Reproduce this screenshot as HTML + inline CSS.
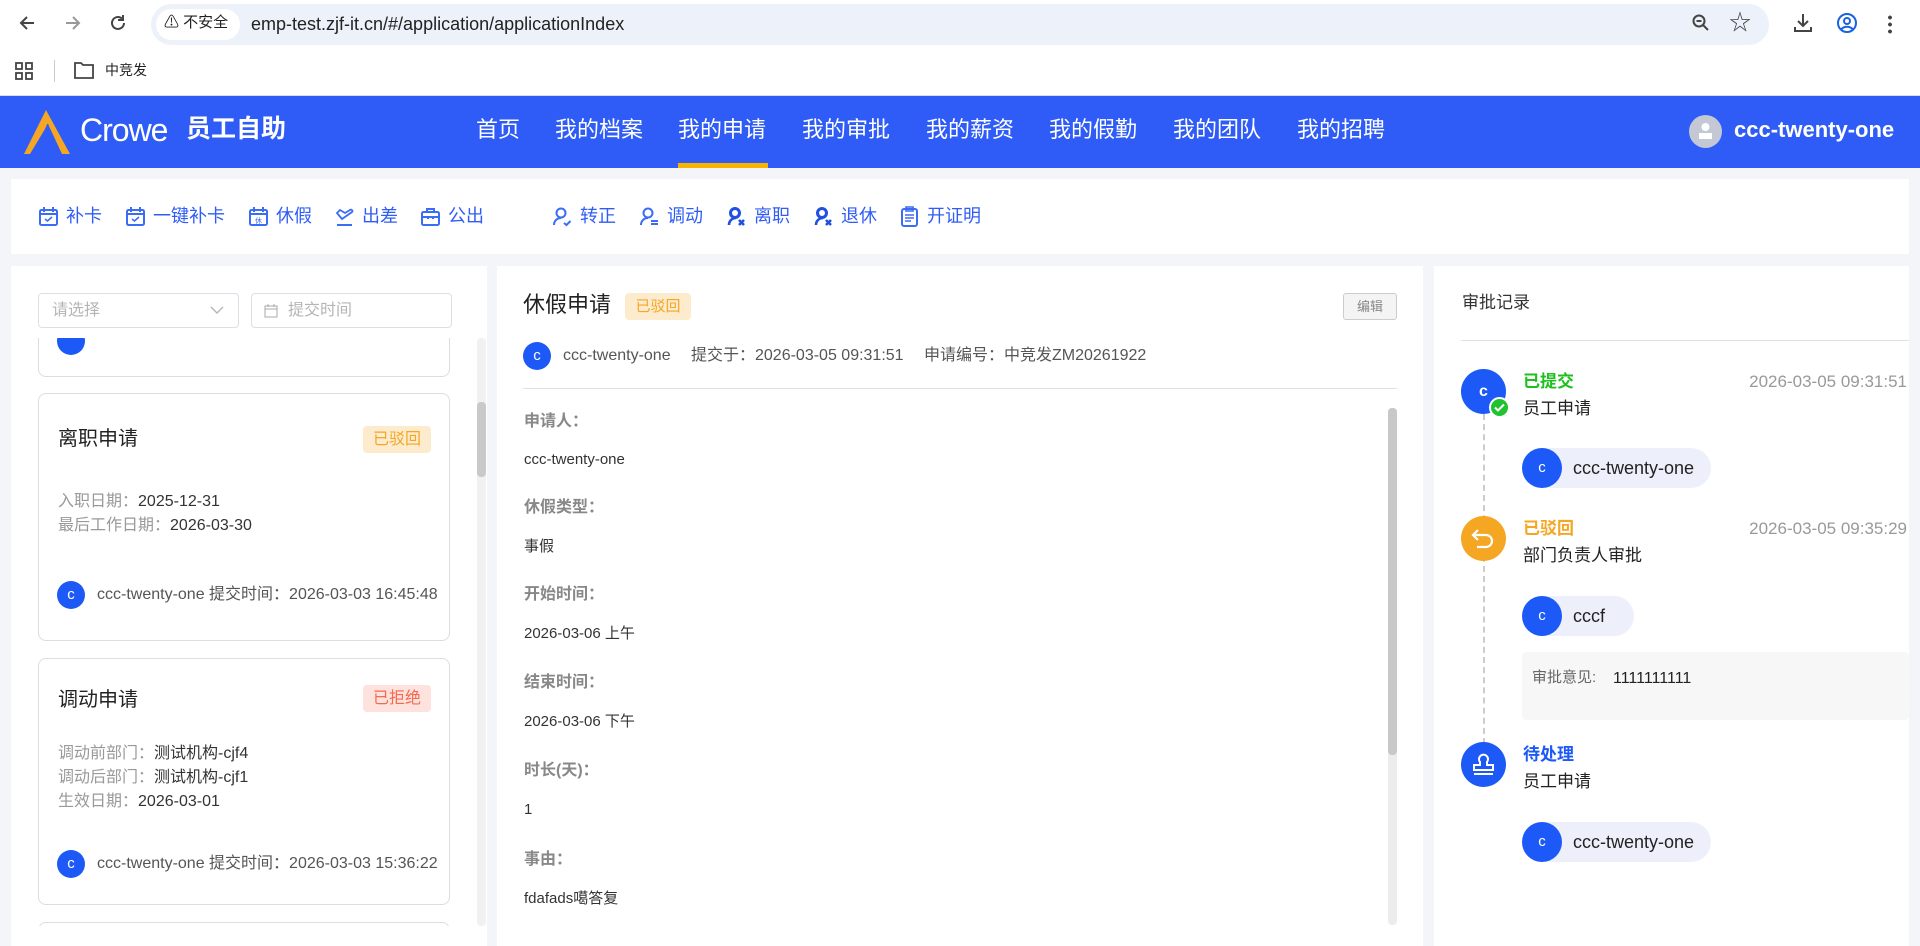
<!DOCTYPE html>
<html><head><meta charset="utf-8"><style>
*{margin:0;padding:0;box-sizing:border-box}
html,body{width:1920px;height:946px;overflow:hidden}
body{background:#f4f5f9;font-family:"Liberation Sans","Noto Sans CJK SC",sans-serif;position:relative;color:#333}
.a{position:absolute;white-space:nowrap;line-height:1.25}
.nav{position:absolute;top:115px;font-size:22px;color:#fff;line-height:30px}
.tb{position:absolute;top:204px;font-size:18px;color:#2f5cf6;line-height:24px}
.tb svg{position:absolute;left:-28px;top:2px}
.card{position:absolute;left:38px;width:412px;border:1px solid #ddd;border-radius:8px;background:#fff}
.badge{position:absolute;border-radius:4px;font-size:16px;text-align:center;line-height:27px}
.av{position:absolute;border-radius:50%;background:#1c59f7;color:#fff;text-align:center;font-size:15px}
.lab{color:#999}
.fl{position:absolute;left:524px;font-size:16px;font-weight:bold;color:#888;line-height:20px}
.fv{position:absolute;left:524px;font-size:15px;color:#333;line-height:19px}
.pill{position:absolute;left:1522px;height:40px;border-radius:20px;background:#edf0fb;font-size:18px;color:#222;line-height:40px;padding-left:51px}
.pill i{position:absolute;left:0;top:0;width:40px;height:40px;border-radius:50%;background:#1c59f7;color:#fff;font-style:normal;font-size:15px;text-align:center;line-height:40px}
</style></head><body>
<div class="a" style="left:0;top:0;width:1920px;height:95px;background:#fff"></div>
<div class="a" style="left:0;top:95px;width:1920px;height:1px;background:#dcdcdc"></div>
<svg class="a" style="left:17px;top:13px" width="20" height="20" viewBox="0 0 20 20"><path d="M17 10H4M10 4L4 10l6 6" stroke="#444" stroke-width="2" fill="none"/></svg>
<svg class="a" style="left:63px;top:13px" width="20" height="20" viewBox="0 0 20 20"><path d="M3 10h13M10 4l6 6-6 6" stroke="#999" stroke-width="2" fill="none"/></svg>
<svg class="a" style="left:108px;top:13px" width="20" height="20" viewBox="0 0 20 20"><path d="M16 10a6 6 0 1 1-2-4.5" stroke="#444" stroke-width="2" fill="none"/><path d="M15 2v5h-5" stroke="#444" stroke-width="2" fill="none"/></svg>
<div class="a" style="left:151px;top:4px;width:1618px;height:41px;border-radius:21px;background:#edf1f9"></div>
<div class="a" style="left:156px;top:9px;width:84px;height:31px;border-radius:16px;background:#fff"></div>
<div class="a" style="left:164px;top:14px;font-size:15px;color:#222">⚠ 不安全</div>
<div class="a" style="left:251px;top:13px;font-size:18px;color:#222">emp-test.zjf-it.cn/#/application/applicationIndex</div>
<svg class="a" style="left:1691px;top:13px" width="20" height="20" viewBox="0 0 20 20"><circle cx="8" cy="8" r="5.5" stroke="#444" stroke-width="2" fill="none"/><path d="M12 12l5 5M5.5 8h5" stroke="#444" stroke-width="2"/></svg>
<div class="a" style="left:1729px;top:9px;font-size:22px;color:#444">☆</div>
<svg class="a" style="left:1792px;top:12px" width="22" height="22" viewBox="0 0 22 22"><path d="M11 2v12M6 9l5 5 5-5M3 15v4h16v-4" stroke="#444" stroke-width="2" fill="none"/></svg>
<svg class="a" style="left:1836px;top:12px" width="22" height="22" viewBox="0 0 22 22"><circle cx="11" cy="11" r="9" stroke="#1a63e0" stroke-width="2" fill="none"/><circle cx="11" cy="9" r="3" stroke="#1a63e0" stroke-width="2" fill="none"/><path d="M5.5 17c3-3 8-3 11 0" stroke="#1a63e0" stroke-width="2" fill="none"/></svg>
<div class="a" style="left:1888px;top:14px;width:4px;height:20px;background:radial-gradient(circle,#444 1.8px,transparent 2px) 0 0/4px 7px"></div>
<svg class="a" style="left:15px;top:62px" width="18" height="18" viewBox="0 0 18 18"><g stroke="#444" stroke-width="1.8" fill="none"><rect x="1" y="1" width="6" height="6"/><rect x="11" y="1" width="6" height="6"/><rect x="1" y="11" width="6" height="6"/><rect x="11" y="11" width="6" height="6"/></g></svg>
<div class="a" style="left:54px;top:60px;width:1px;height:22px;background:#ccc"></div>
<svg class="a" style="left:74px;top:61px" width="20" height="18" viewBox="0 0 20 18"><path d="M1 2h6l2 2h10v13H1z" stroke="#444" stroke-width="1.8" fill="none"/></svg>
<div class="a" style="left:105px;top:62px;font-size:14px;color:#222">中竞发</div>
<div class="a" style="left:0;top:96px;width:1920px;height:72px;background:#2f5cf6"></div>
<svg class="a" style="left:22px;top:108px" width="50" height="48" viewBox="0 0 50 48"><path d="M24 2L48 46 40 46 26 16 8 46 2 46z" fill="#f5a623"/><path d="M26 16L14 44M28 22L20 44M30 28L26 44" stroke="#2f5cf6" stroke-width="1.5"/></svg>
<div class="a" style="left:80px;top:110px;font-size:32px;color:#fff;letter-spacing:-1px">Crowe</div>
<div class="a" style="left:186px;top:114px;font-size:25px;color:#fff;font-weight:bold">员工自助</div>
<div class="nav" style="left:476px">首页</div>
<div class="nav" style="left:555px">我的档案</div>
<div class="nav" style="left:678px">我的申请</div>
<div class="nav" style="left:802px">我的审批</div>
<div class="nav" style="left:926px">我的薪资</div>
<div class="nav" style="left:1049px">我的假勤</div>
<div class="nav" style="left:1173px">我的团队</div>
<div class="nav" style="left:1297px">我的招聘</div>
<div class="a" style="left:678px;top:163px;width:90px;height:5px;background:#f7b500"></div>
<div class="a" style="left:1689px;top:115px;width:33px;height:33px;border-radius:50%;background:#c4c8d4"></div>
<svg class="a" style="left:1697px;top:121px" width="17" height="20" viewBox="0 0 17 20"><circle cx="8.5" cy="6" r="4" fill="#fff"/><rect x="2" y="12" width="13" height="6" fill="#fff"/></svg>
<div class="a" style="left:1734px;top:116px;font-size:22px;font-weight:bold;color:#fff">ccc-twenty-one</div>
<div class="a" style="left:11px;top:179px;width:1898px;height:75px;background:#fff"></div>
<svg width="0" height="0" style="position:absolute"><defs>
<g id="cal"><rect x="2" y="4" width="17" height="15" rx="1.5" stroke="#3b6cf5" stroke-width="2" fill="none"/><path d="M2 8h17M6 1v5M15 1v5" stroke="#3b6cf5" stroke-width="2"/></g>
</defs></svg>
<div class="tb" style="left:66px"><svg width="21" height="21" viewBox="0 0 21 21"><use href="#cal"/><path d="M7 13l2.5 2 4.5-4" stroke="#3b6cf5" stroke-width="1.6" fill="none"/></svg>补卡</div>
<div class="tb" style="left:153px"><svg width="21" height="21" viewBox="0 0 21 21"><use href="#cal"/><path d="M7 13l2.5 2 4.5-4" stroke="#3b6cf5" stroke-width="1.6" fill="none"/></svg>一键补卡</div>
<div class="tb" style="left:276px"><svg width="21" height="21" viewBox="0 0 21 21"><use href="#cal"/><text x="10.5" y="17" font-size="7" text-anchor="middle" fill="#3b6cf5" font-family="Noto Sans CJK SC">休</text></svg>休假</div>
<div class="tb" style="left:362px"><svg width="21" height="21" viewBox="0 0 21 21"><path d="M3 7l5 6 10-7c1-1 0-3-2-2l-5 3-5-3z" stroke="#3b6cf5" stroke-width="1.8" fill="none"/><path d="M3 19h15" stroke="#3b6cf5" stroke-width="2"/></svg>出差</div>
<div class="tb" style="left:448px"><svg width="21" height="21" viewBox="0 0 21 21"><rect x="2" y="6" width="17" height="13" rx="1.5" stroke="#3b6cf5" stroke-width="2" fill="none"/><path d="M7 6V3h7v3M2 11h17M8 10v3M13 10v3" stroke="#3b6cf5" stroke-width="2" fill="none"/></svg>公出</div>
<div class="tb" style="left:580px"><svg width="21" height="21" viewBox="0 0 21 21"><circle cx="9" cy="7" r="4.5" stroke="#3b6cf5" stroke-width="2" fill="none"/><path d="M2 19c0-4 3-7 7-7M12 17l2.5 2 4-4" stroke="#3b6cf5" stroke-width="2" fill="none"/></svg>转正</div>
<div class="tb" style="left:667px"><svg width="21" height="21" viewBox="0 0 21 21"><circle cx="9" cy="7" r="4.5" stroke="#3b6cf5" stroke-width="2" fill="none"/><path d="M2 19c0-4 3-7 7-7M12 15h7M12 18h7" stroke="#3b6cf5" stroke-width="2" fill="none"/></svg>调动</div>
<div class="tb" style="left:754px"><svg width="21" height="21" viewBox="0 0 21 21"><circle cx="9" cy="7" r="4.5" stroke="#2050e0" stroke-width="3" fill="none"/><path d="M3 19c0-4 3-7 7-7M13 14l5 5M18 14l-5 5" stroke="#2050e0" stroke-width="2.6" fill="none"/></svg>离职</div>
<div class="tb" style="left:841px"><svg width="21" height="21" viewBox="0 0 21 21"><circle cx="9" cy="7" r="4.5" stroke="#2050e0" stroke-width="3" fill="none"/><path d="M3 19c0-4 3-7 7-7M13 14l5 5M18 14l-5 5" stroke="#2050e0" stroke-width="2.6" fill="none"/></svg>退休</div>
<div class="tb" style="left:927px"><svg width="21" height="21" viewBox="0 0 21 21"><rect x="3" y="3" width="15" height="17" rx="2" stroke="#3b6cf5" stroke-width="2" fill="none"/><path d="M7 1h7v4H7zM6 9h9M6 12h9M6 15h6" stroke="#3b6cf5" stroke-width="1.6" fill="none"/></svg>开证明</div>
<div class="a" style="left:11px;top:266px;width:476px;height:680px;background:#fff"></div>
<div class="a" style="left:38px;top:293px;width:201px;height:35px;border:1px solid #dcdfe6;border-radius:4px"></div>
<div class="a" style="left:52px;top:301px;font-size:16px;color:#b5b5b5">请选择</div>
<svg class="a" style="left:210px;top:305px" width="14" height="10" viewBox="0 0 14 10"><path d="M1 2l6 6 6-6" stroke="#b5b5b5" stroke-width="1.4" fill="none"/></svg>
<div class="a" style="left:251px;top:293px;width:201px;height:35px;border:1px solid #dcdfe6;border-radius:4px"></div>
<svg class="a" style="left:264px;top:304px" width="14" height="14" viewBox="0 0 14 14"><rect x="1" y="2" width="12" height="11" stroke="#aaa" fill="none"/><path d="M1 5h12M4 0v3M10 0v3" stroke="#aaa"/></svg>
<div class="a" style="left:288px;top:301px;font-size:16px;color:#b5b5b5">提交时间</div>
<div class="a" style="left:11px;top:338px;width:466px;height:588px;overflow:hidden">
 <div class="card" style="left:27px;top:-60px;height:99px"><div class="av" style="left:18px;top:48px;width:28px;height:28px"></div></div>
 <div class="card" style="left:27px;top:55px;height:248px">
  <div class="a" style="left:19px;top:33px;font-size:20px;color:#222">离职申请</div>
  <div class="badge" style="left:324px;top:32px;width:68px;background:#fdebcd;color:#f5a623">已驳回</div>
  <div class="a" style="left:19px;top:98px;font-size:16px"><span class="lab">入职日期：</span>2025-12-31</div>
  <div class="a" style="left:19px;top:122px;font-size:16px"><span class="lab">最后工作日期：</span>2026-03-30</div>
  <div class="av" style="left:18px;top:187px;width:28px;height:28px;line-height:28px">c</div>
  <div class="a" style="left:58px;top:191px;font-size:16px;color:#555">ccc-twenty-one 提交时间：2026-03-03 16:45:48</div>
 </div>
 <div class="card" style="left:27px;top:320px;height:247px">
  <div class="a" style="left:19px;top:29px;font-size:20px;color:#222">调动申请</div>
  <div class="badge" style="left:324px;top:26px;width:68px;background:#fde2dd;color:#f5694e">已拒绝</div>
  <div class="a" style="left:19px;top:85px;font-size:16px"><span class="lab">调动前部门：</span>测试机构-cjf4</div>
  <div class="a" style="left:19px;top:109px;font-size:16px"><span class="lab">调动后部门：</span>测试机构-cjf1</div>
  <div class="a" style="left:19px;top:133px;font-size:16px"><span class="lab">生效日期：</span>2026-03-01</div>
  <div class="av" style="left:18px;top:191px;width:28px;height:28px;line-height:28px">c</div>
  <div class="a" style="left:58px;top:195px;font-size:16px;color:#555">ccc-twenty-one 提交时间：2026-03-03 15:36:22</div>
 </div>
 <div class="card" style="left:27px;top:584px;height:100px"></div>
</div>
<div class="a" style="left:477px;top:338px;width:9px;height:588px;background:#f1f1f1;border-radius:4px"></div>
<div class="a" style="left:477px;top:402px;width:9px;height:75px;background:#c9c9c9;border-radius:4px"></div>
<div class="a" style="left:497px;top:266px;width:926px;height:680px;background:#fff"></div>
<div class="a" style="left:523px;top:291px;font-size:22px;color:#222">休假申请</div>
<div class="badge" style="left:625px;top:293px;width:66px;background:#fdebcd;color:#f5a623;font-size:15px">已驳回</div>
<div class="a" style="left:1343px;top:293px;width:54px;height:27px;border:1px solid #ccc;border-radius:3px;background:#f4f4f4;color:#888;font-size:13px;text-align:center;line-height:25px">编辑</div>
<div class="av" style="left:523px;top:342px;width:28px;height:28px;line-height:28px">c</div>
<div class="a" style="left:563px;top:346px;font-size:16px;color:#555">ccc-twenty-one</div>
<div class="a" style="left:691px;top:346px;font-size:16px;color:#555">提交于：2026-03-05 09:31:51</div>
<div class="a" style="left:924px;top:346px;font-size:16px;color:#555">申请编号：中竞发ZM20261922</div>
<div class="a" style="left:523px;top:388px;width:874px;height:1px;background:#dfe1e8"></div>
<div class="fl" style="top:412px">申请人：</div><div class="fv" style="top:450px">ccc-twenty-one</div>
<div class="fl" style="top:498px">休假类型：</div><div class="fv" style="top:537px">事假</div>
<div class="fl" style="top:585px">开始时间：</div><div class="fv" style="top:624px">2026-03-06 上午</div>
<div class="fl" style="top:673px">结束时间：</div><div class="fv" style="top:712px">2026-03-06 下午</div>
<div class="fl" style="top:761px">时长(天)：</div><div class="fv" style="top:800px">1</div>
<div class="fl" style="top:850px">事由：</div><div class="fv" style="top:889px">fdafads噶答复</div>
<div class="a" style="left:1388px;top:408px;width:9px;height:517px;background:#ececec;border-radius:4px"></div>
<div class="a" style="left:1388px;top:408px;width:9px;height:347px;background:#c8c8c8;border-radius:4px"></div>
<div class="a" style="left:1434px;top:266px;width:475px;height:680px;background:#fff"></div>
<div class="a" style="left:1462px;top:292px;font-size:17px;color:#333">审批记录</div>
<div class="a" style="left:1461px;top:340px;width:448px;height:1px;background:#dfe1e8"></div>
<div class="a" style="left:1483px;top:414px;width:0;height:330px;border-left:2px dashed #ccc"></div>
<div class="a" style="left:1461px;top:369px;width:45px;height:45px;border-radius:50%;background:#1c59f7;color:#fff;font-weight:bold;font-size:16px;text-align:center;line-height:45px">c</div>
<div class="a" style="left:1489px;top:397px;width:21px;height:21px;border-radius:50%;background:#1fc22f;border:2px solid #fff"></div>
<svg class="a" style="left:1493px;top:402px" width="13" height="11" viewBox="0 0 13 11"><path d="M2 5.5l3 3 6-6" stroke="#fff" stroke-width="2" fill="none"/></svg>
<div class="a" style="left:1523px;top:371px;font-size:17px;font-weight:bold;color:#1ec01e">已提交</div>
<div class="a" style="left:1742px;top:371px;width:165px;text-align:right;font-size:17px;color:#999">2026-03-05 09:31:51</div>
<div class="a" style="left:1523px;top:398px;font-size:17px;color:#222">员工申请</div>
<div class="pill" style="top:448px;width:189px"><i>c</i>ccc-twenty-one</div>
<div class="a" style="left:1461px;top:516px;width:45px;height:45px;border-radius:50%;background:#f5a623"></div>
<svg class="a" style="left:1470px;top:526px" width="27" height="25" viewBox="0 0 27 25"><path d="M8 4L3 9l5 5M3 9h13a6 6 0 0 1 0 12H7" stroke="#fff" stroke-width="2.2" fill="none"/></svg>
<div class="a" style="left:1523px;top:518px;font-size:17px;font-weight:bold;color:#f5a623">已驳回</div>
<div class="a" style="left:1742px;top:518px;width:165px;text-align:right;font-size:17px;color:#999">2026-03-05 09:35:29</div>
<div class="a" style="left:1523px;top:545px;font-size:17px;color:#222">部门负责人审批</div>
<div class="pill" style="top:596px;width:112px"><i>c</i>cccf</div>
<div class="a" style="left:1522px;top:652px;width:387px;height:68px;background:#f7f7f7;border-radius:4px"></div>
<div class="a" style="left:1532px;top:669px;font-size:15px;color:#666">审批意见:</div>
<div class="a" style="left:1613px;top:669px;font-size:16px;color:#222">1111111111</div>
<div class="a" style="left:1461px;top:742px;width:45px;height:45px;border-radius:50%;background:#1c59f7"></div>
<svg class="a" style="left:1470px;top:750px" width="27" height="28" viewBox="0 0 27 28"><path d="M10 15v-3a4.5 4.5 0 1 1 7 0v3h6v5H4v-5z" stroke="#fff" stroke-width="2" fill="none"/><path d="M4 24h19" stroke="#fff" stroke-width="2"/></svg>
<div class="a" style="left:1523px;top:744px;font-size:17px;font-weight:bold;color:#1c59f7">待处理</div>
<div class="a" style="left:1523px;top:771px;font-size:17px;color:#222">员工申请</div>
<div class="pill" style="top:822px;width:189px"><i>c</i>ccc-twenty-one</div>
</body></html>
